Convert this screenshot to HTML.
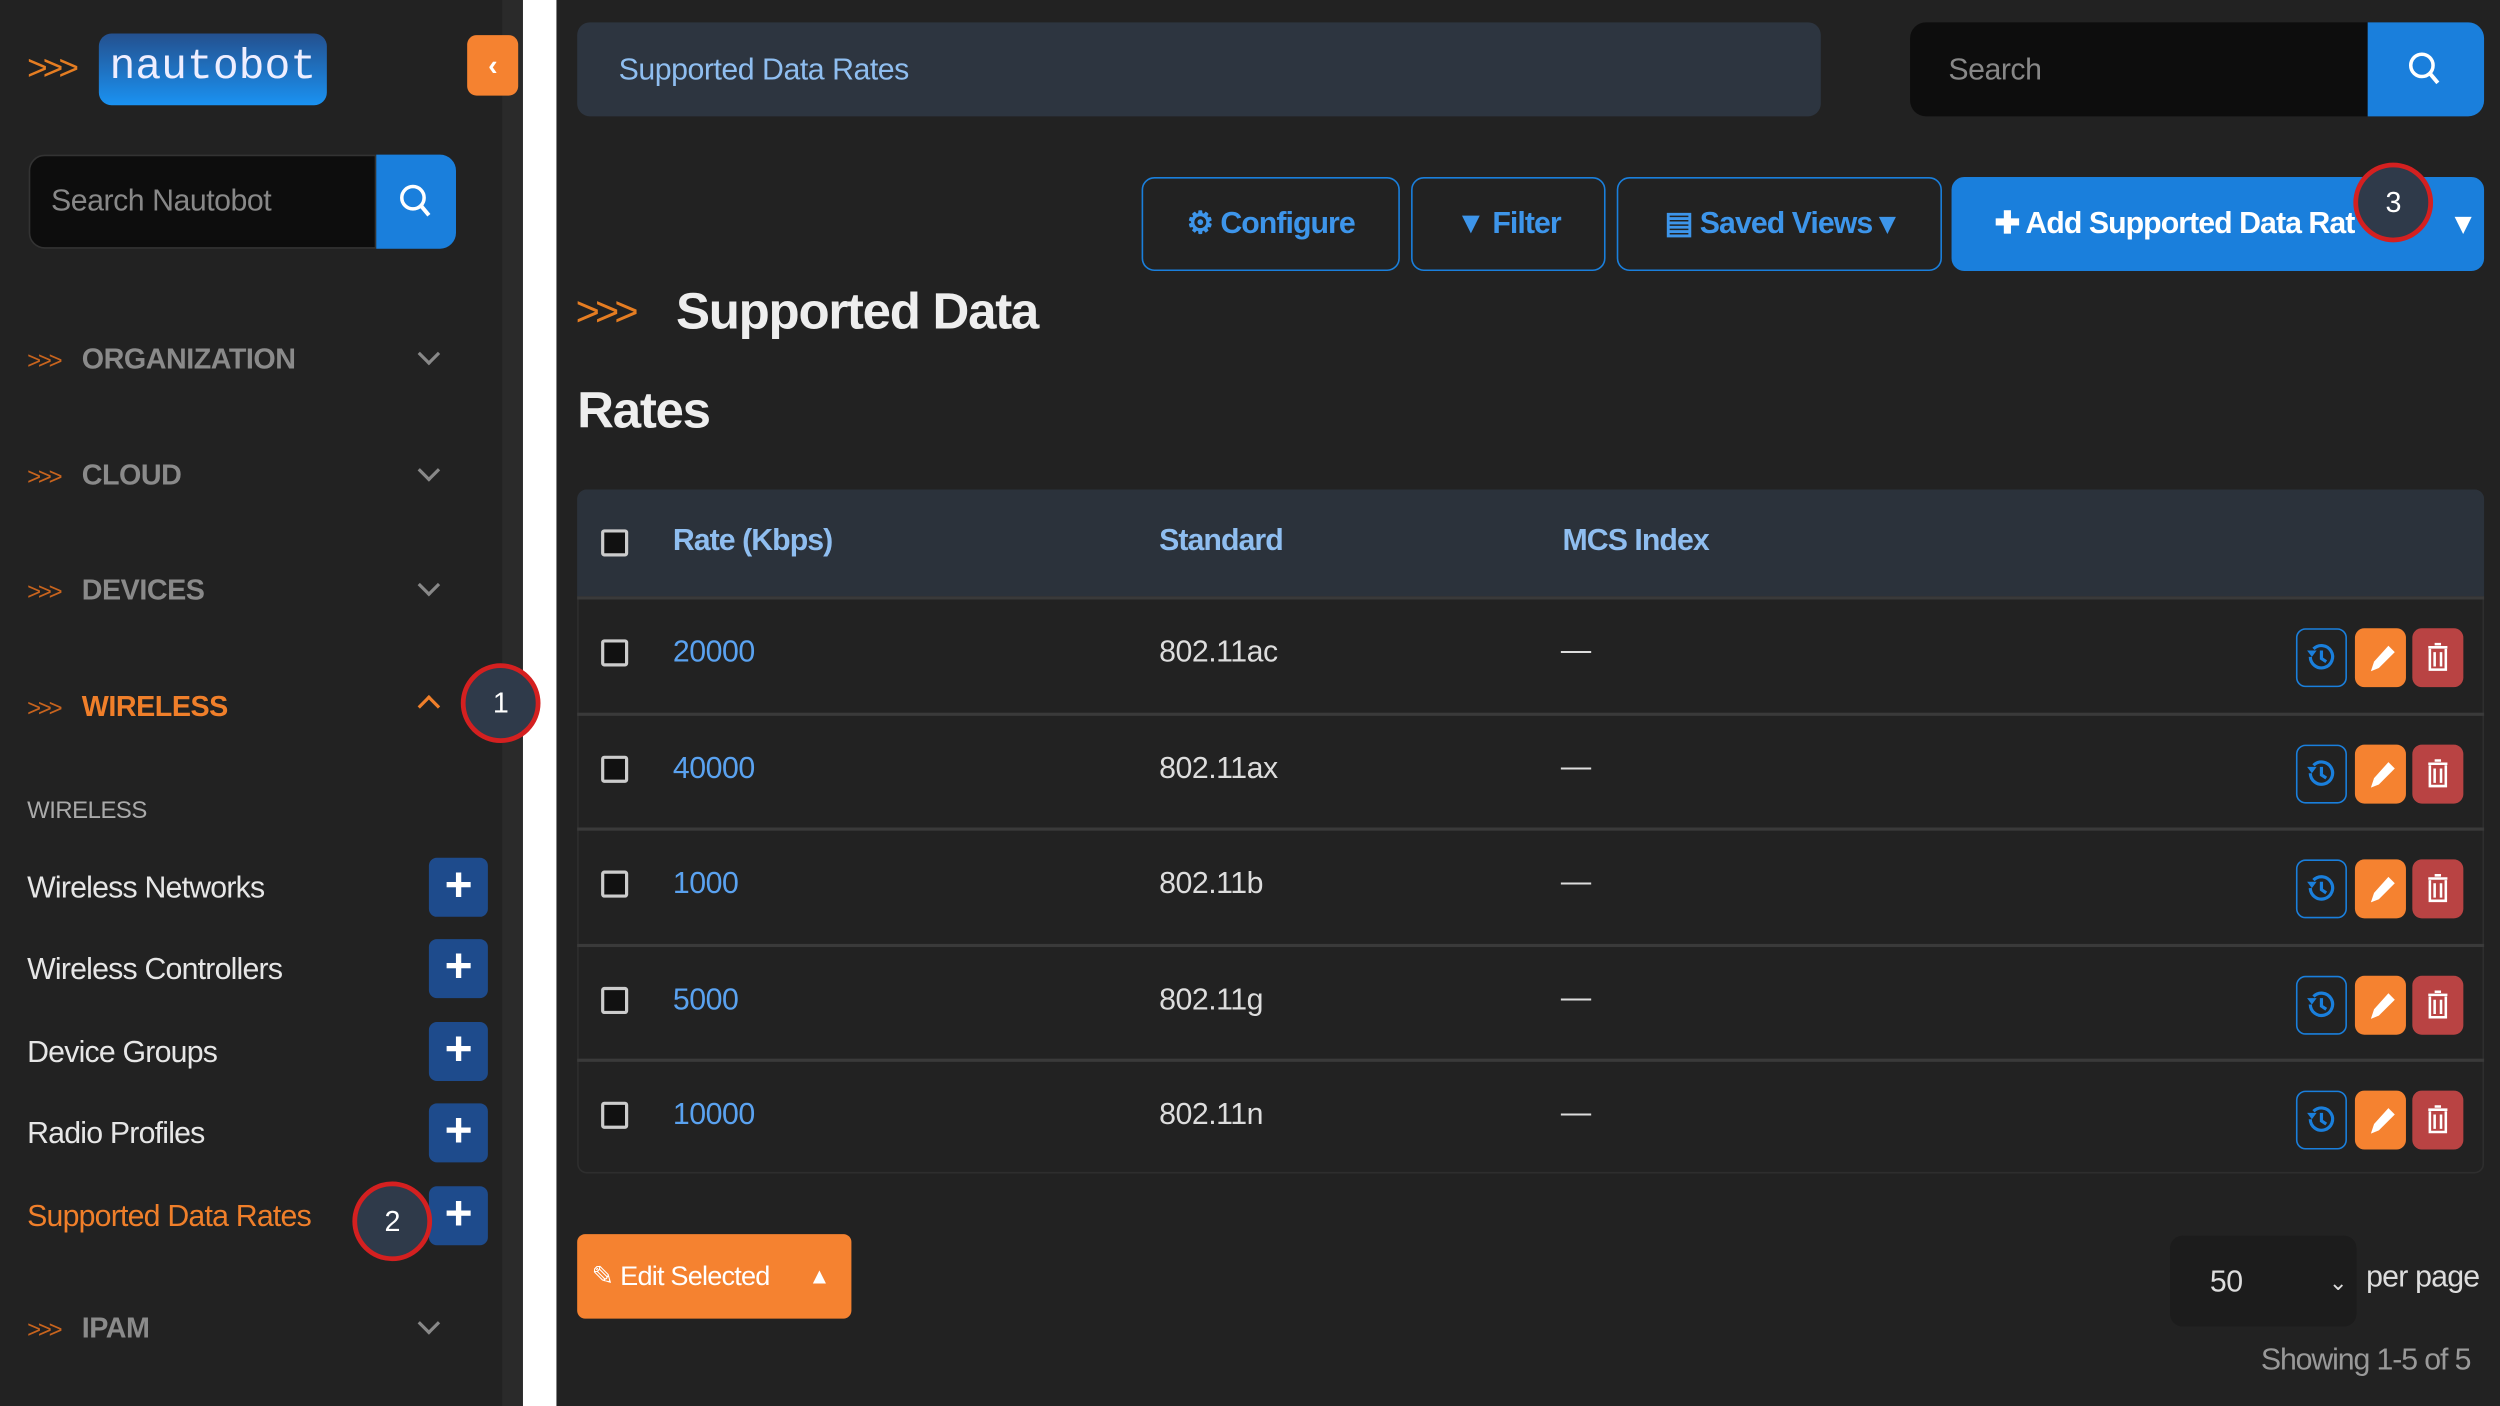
<!DOCTYPE html>
<html><head><meta charset="utf-8"><style>
*{box-sizing:border-box;margin:0;padding:0;white-space:nowrap}
body{width:2500px;height:1406px;overflow:hidden;background:#222;font-family:"Liberation Sans",sans-serif}
#r{position:absolute;left:0;top:0;width:1568px;height:882px;transform:scale(1.5944);transform-origin:0 0;background:#222;color:#ddd;letter-spacing:-0.3px}
.a{position:absolute}
.nav{position:absolute;left:17px;font-size:18px;color:#8a8a8a;font-weight:bold}
.nav b{color:#c8641e;font-weight:normal;font-size:15px;margin-right:14px;letter-spacing:-2px}
.chev{position:absolute;left:264px;width:10px;height:10px;border-right:2px solid #888;border-bottom:2px solid #888;transform:rotate(45deg)}
.item{position:absolute;left:17px;font-size:19px;color:#e6e6e6;letter-spacing:-0.5px}
.plus{position:absolute;left:269px;width:37px;height:37px;background:#1e4b8c;border-radius:5px;color:#fff;font-size:30px;font-weight:bold;text-align:center;line-height:36px}
.btn{position:absolute;top:111px;height:59px;border:1.5px solid #1a7fdc;border-radius:8px;color:#3d95ea;font-size:19px;font-weight:bold;display:flex;align-items:center;justify-content:center;gap:6px;letter-spacing:-0.6px}
.row{position:absolute;left:362px;width:1196px;height:72px;border-top:2px solid #3a3a3a}
.cb{position:absolute;left:15px;width:17px;height:17px;border:2px solid #ccc;border-radius:2px;background:#111}
.row .t{position:absolute;font-size:19px}
.circ{position:absolute;width:50px;height:50px;border-radius:50%;border:3px solid #d42020;background:#2f3a4a;color:#fff;font-size:18px;text-align:center;line-height:44px}
.ic{position:absolute;width:32px;height:37px;border-radius:6px}
</style></head><body><div id="r">
<div class="a" style="left:315px;top:0;width:13px;height:882px;background:#2a2a2a"></div>
<div class="a" style="left:328px;top:0;width:21px;height:882px;background:#fff"></div>
<div class="a" style="left:17px;top:30px;color:#e57d22;font-size:22px;letter-spacing:-3px">&gt;&gt;&gt;</div>
<div class="a" style="left:62px;top:21px;width:143px;height:45px;border-radius:8px;background:linear-gradient(#24508e,#1a92f2);color:#eef;font-family:'Liberation Mono',monospace;font-size:27px;text-align:center;line-height:44px;letter-spacing:0">nautobot</div>
<div class="a" style="left:293px;top:22px;width:32px;height:38px;border-radius:6px;background:#f58230;color:#fff;font-size:18px;text-align:center;line-height:38px;font-weight:bold">‹</div>
<div class="a" style="left:18px;top:97px;width:218px;height:59px;background:#0d0d0d;border:1px solid #333;border-radius:10px 0 0 10px;color:#888;font-size:19px;line-height:58px;padding-left:13px">Search Nautobot</div>
<div class="a" style="left:236px;top:97px;width:50px;height:59px;background:#1a7fdc;border-radius:0 10px 10px 0"><svg width="50" height="59"><circle cx="23" cy="27" r="7" stroke="#fff" stroke-width="2.2" fill="none"/><line x1="28" y1="32" x2="33" y2="38" stroke="#fff" stroke-width="2.5"/></svg></div>
<div class="nav" style="top:215px"><b>&gt;&gt;&gt;</b>ORGANIZATION</div><div class="chev" style="top:217px"></div>
<div class="nav" style="top:288px"><b>&gt;&gt;&gt;</b>CLOUD</div><div class="chev" style="top:290px"></div>
<div class="nav" style="top:360px"><b>&gt;&gt;&gt;</b>DEVICES</div><div class="chev" style="top:362px"></div>
<div class="nav" style="top:433px;color:#f07f2a"><b>&gt;&gt;&gt;</b>WIRELESS</div><div class="chev" style="top:438px;transform:rotate(-135deg);border-color:#f07f2a"></div>
<div class="a" style="left:17px;top:500px;font-size:15px;color:#aaa">WIRELESS</div>
<div class="item" style="top:547px">Wireless Networks</div><div class="plus" style="top:538px">+</div>
<div class="item" style="top:598px">Wireless Controllers</div><div class="plus" style="top:589px">+</div>
<div class="item" style="top:650px">Device Groups</div><div class="plus" style="top:641px">+</div>
<div class="item" style="top:701px">Radio Profiles</div><div class="plus" style="top:692px">+</div>
<div class="item" style="top:753px;color:#f07f2a">Supported Data Rates</div><div class="plus" style="top:744px">+</div>
<div class="nav" style="top:823px"><b>&gt;&gt;&gt;</b>IPAM</div><div class="chev" style="top:825px"></div>
<div class="a" style="left:362px;top:14px;width:780px;height:59px;background:#2d3540;border-radius:8px;color:#8fbef0;font-size:19px;line-height:61px;padding-left:26px">Supported Data Rates</div>
<div class="a" style="left:1198px;top:14px;width:287px;height:59px;background:#0d0d0d;border-radius:10px 0 0 10px;color:#888;font-size:19px;line-height:61px;padding-left:24px">Search</div>
<div class="a" style="left:1485px;top:14px;width:73px;height:59px;background:#1a7fdc;border-radius:0 10px 10px 0"><svg width="73" height="59"><circle cx="34" cy="27" r="7" stroke="#fff" stroke-width="2.2" fill="none"/><line x1="39" y1="32" x2="44" y2="38" stroke="#fff" stroke-width="2.5"/></svg></div>
<div class="btn" style="left:716px;width:162px">⚙ Configure</div>
<div class="btn" style="left:885px;width:122px">▼ Filter</div>
<div class="btn" style="left:1014px;width:204px">▤ Saved Views ▾</div>
<div class="btn" style="left:1224px;width:334px;background:#1a7fdc;color:#fff;justify-content:flex-start;padding-left:26px;overflow:hidden">✚ Add Supported Data Rat<span style="position:absolute;right:8px;top:17px">▾</span></div>
<div class="a" style="left:361px;top:180px;color:#e57d22;font-size:26px;letter-spacing:-3px">&gt;&gt;&gt;</div>
<div class="a" style="left:424px;top:177px;font-size:32px;color:#eee;font-weight:bold;letter-spacing:-0.8px">Supported Data</div>
<div class="a" style="left:362px;top:239px;font-size:32px;color:#eee;font-weight:bold;letter-spacing:-0.8px">Rates</div>
<div class="a" style="left:362px;top:307px;width:1196px;height:429px;border:1px solid #2e2e2e;border-radius:6px"></div>
<div class="a" style="left:362px;top:307px;width:1196px;height:67px;background:#2b323b;border-radius:6px 6px 0 0">
<div class="cb" style="top:25px"></div>
<div class="a" style="left:60px;top:22px;font-size:19px;font-weight:bold;color:#8fbef0;letter-spacing:-0.6px">Rate (Kbps)</div>
<div class="a" style="left:365px;top:22px;font-size:19px;font-weight:bold;color:#8fbef0;letter-spacing:-0.6px">Standard</div>
<div class="a" style="left:618px;top:22px;font-size:19px;font-weight:bold;color:#8fbef0;letter-spacing:-0.6px">MCS Index</div>
</div>
<div id="rows"></div>
<script>
var d=[["20000","802.11ac"],["40000","802.11ax"],["1000","802.11b"],["5000","802.11g"],["10000","802.11n"]],h="";
d.forEach(function(x,i){var t=374+i*72.5;h+='<div class="row" style="top:'+t+'px"><div class="cb" style="top:25px"></div><div class="t" style="left:60px;top:23px;color:#5aa2f0">'+x[0]+'</div><div class="t" style="left:365px;top:23px;color:#ddd">'+x[1]+'</div><div class="t" style="left:617px;top:22px;color:#ddd">—</div>'+
'<div class="ic" style="left:1078px;top:18px;border:1.5px solid #1a7fdc"><svg width="29" height="34"><path d="M8 17a7 7 0 1 0 2-5" stroke="#1a7fdc" stroke-width="2" fill="none"/><path d="M6 13l3 4 3-4z" fill="#1a7fdc"/><path d="M15 13v5l3 2" stroke="#1a7fdc" stroke-width="2" fill="none"/></svg></div>'+
'<div class="ic" style="left:1115px;top:18px;background:#f58230"><svg width="32" height="37"><path d="M10 27l2-6 9-10 4 4-10 10z" fill="#fff"/></svg></div>'+
'<div class="ic" style="left:1151px;top:18px;background:#b94343"><svg width="32" height="37"><path d="M10 12h12M14 10h4M11 13v13h10V13M14 15v9M18 15v9" stroke="#fff" stroke-width="1.6" fill="none"/></svg></div></div>'});
document.getElementById("rows").innerHTML=h;
</script>
<div class="a" style="left:362px;top:774px;width:172px;height:53px;background:#f58230;border-radius:5px;color:#fff;font-size:17px;line-height:53px;padding-left:9px;letter-spacing:-0.5px">✎ Edit Selected <span style="position:absolute;left:145px;font-size:14px">▲</span></div>
<div class="a" style="left:1361px;top:775px;width:117px;height:57px;background:#1c1c1c;border-radius:8px;color:#ddd;font-size:19px;line-height:59px;padding-left:25px">50<span style="position:absolute;right:6px;font-size:14px">⌄</span></div>
<div class="a" style="left:1484px;top:791px;font-size:19px;color:#ddd;letter-spacing:-0.5px">per page</div>
<div class="a" style="left:1418px;top:843px;font-size:19px;color:#999;letter-spacing:-0.7px">Showing 1-5 of 5</div>
<div class="circ" style="left:289px;top:416px">1</div>
<div class="circ" style="left:221px;top:741px">2</div>
<div class="circ" style="left:1476px;top:102px">3</div>
</div></body></html>
